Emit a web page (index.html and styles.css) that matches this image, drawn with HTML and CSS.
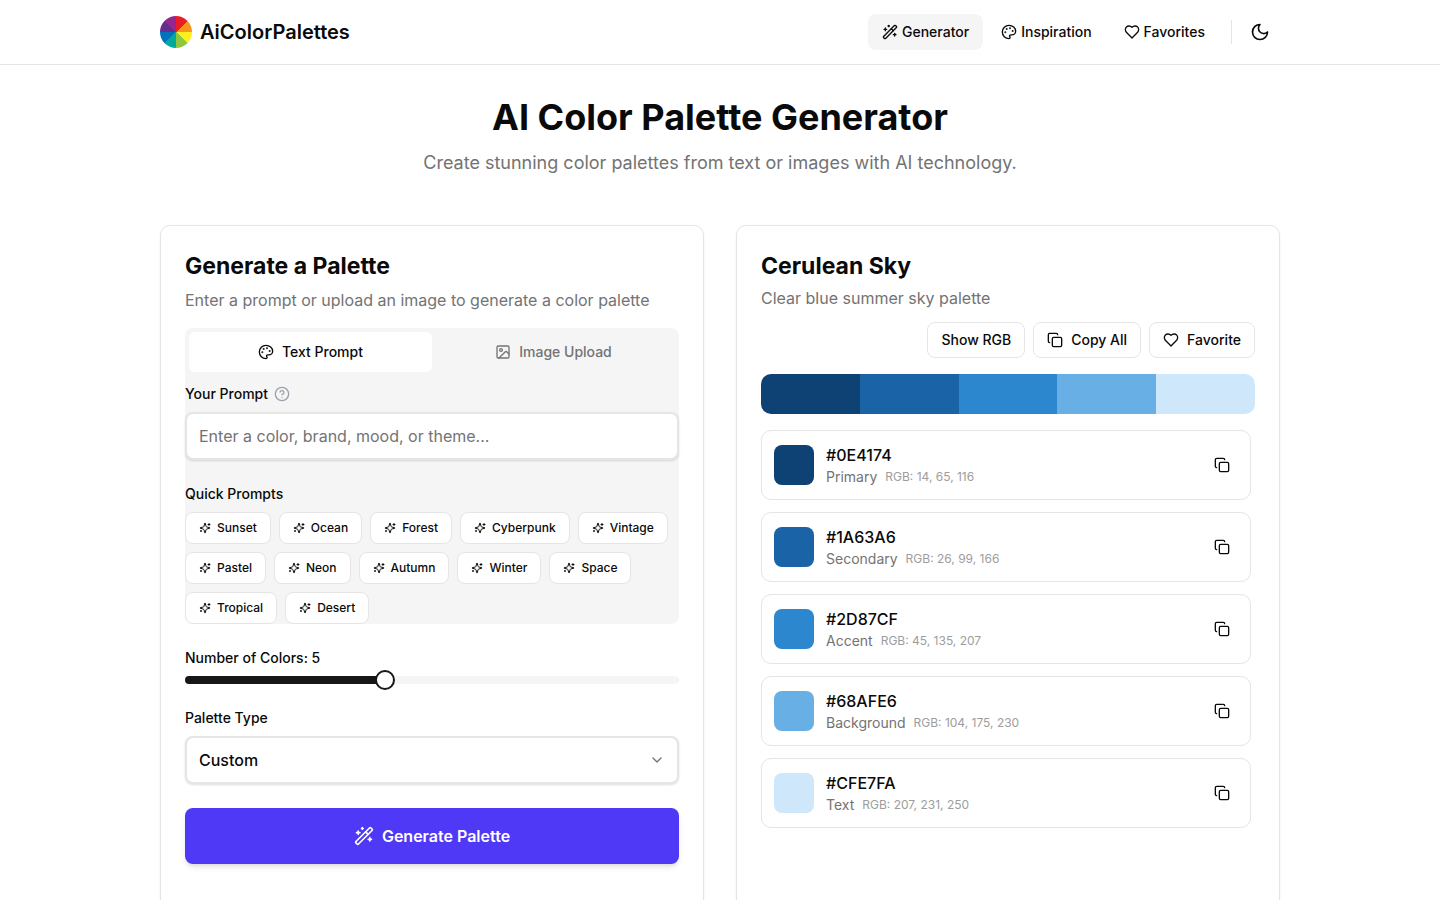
FILE: index.html
```html
<!DOCTYPE html>
<html lang="en">
<head>
<meta charset="utf-8">
<meta name="viewport" content="width=device-width, initial-scale=1">
<title>AiColorPalettes</title>
<link rel="stylesheet" href="styles.css">
</head>
<body>
<svg class="sprite" aria-hidden="true">
  <symbol id="wand" viewBox="0 0 24 24"><path d="m21.64 3.64-1.28-1.28a1.21 1.21 0 0 0-1.72 0L2.36 18.64a1.21 1.21 0 0 0 0 1.72l1.28 1.28a1.2 1.2 0 0 0 1.72 0L21.64 5.36a1.2 1.2 0 0 0 0-1.72"/><path d="m14 7 3 3"/><path d="M5 6v4"/><path d="M19 14v4"/><path d="M10 2v2"/><path d="M7 8H3"/><path d="M21 16h-4"/><path d="M11 3H9"/></symbol>
  <symbol id="palette" viewBox="0 0 24 24"><circle cx="13.5" cy="6.5" r=".5" fill="currentColor"/><circle cx="17.5" cy="10.5" r=".5" fill="currentColor"/><circle cx="8.5" cy="7.5" r=".5" fill="currentColor"/><circle cx="6.5" cy="12.5" r=".5" fill="currentColor"/><path d="M12 2C6.5 2 2 6.5 2 12s4.5 10 10 10c.926 0 1.648-.746 1.648-1.688 0-.437-.18-.835-.437-1.125-.29-.289-.438-.652-.438-1.125a1.64 1.64 0 0 1 1.668-1.668h1.996c3.051 0 5.555-2.503 5.555-5.554C21.965 6.012 17.461 2 12 2z"/></symbol>
  <symbol id="heart" viewBox="0 0 24 24"><path d="M19 14c1.49-1.46 3-3.21 3-5.5A5.5 5.5 0 0 0 16.5 3c-1.76 0-3 .5-4.5 2-1.5-1.5-2.74-2-4.5-2A5.5 5.5 0 0 0 2 8.5c0 2.3 1.5 4.05 3 5.5l7 7Z"/></symbol>
  <symbol id="moon" viewBox="0 0 24 24"><path d="M12 3a6 6 0 0 0 9 9 9 9 0 1 1-9-9Z"/></symbol>
  <symbol id="copy" viewBox="0 0 24 24"><rect width="14" height="14" x="8" y="8" rx="2"/><path d="M4 16c-1.1 0-2-.9-2-2V4c0-1.1.9-2 2-2h10c1.1 0 2 .9 2 2"/></symbol>
  <symbol id="image" viewBox="0 0 24 24"><rect width="18" height="18" x="3" y="3" rx="2"/><circle cx="9" cy="9" r="2"/><path d="m21 15-3.086-3.086a2 2 0 0 0-2.828 0L6 21"/></symbol>
  <symbol id="help" viewBox="0 0 24 24"><circle cx="12" cy="12" r="10"/><path d="M9.09 9a3 3 0 0 1 5.83 1c0 2-3 3-3 3"/><path d="M12 17h.01"/></symbol>
  <symbol id="chevron" viewBox="0 0 24 24"><path d="m6 9 6 6 6-6"/></symbol>
  <symbol id="sparkles" viewBox="0 0 24 24"><path d="M9.937 15.5A2 2 0 0 0 8.5 14.063l-6.135-1.582a.5.5 0 0 1 0-.962L8.5 9.936A2 2 0 0 0 9.937 8.5l1.582-6.135a.5.5 0 0 1 .963 0L14.063 8.5A2 2 0 0 0 15.5 9.937l6.135 1.581a.5.5 0 0 1 0 .964L15.5 14.063a2 2 0 0 0-1.437 1.437l-1.582 6.135a.5.5 0 0 1-.963 0z"/><path d="M20 3v4"/><path d="M22 5h-4"/><path d="M4 17v2"/><path d="M5 18H3"/></symbol>
</svg>

<header class="site-header">
  <div class="container header-row">
    <a class="brand" href="#">
      <span class="logo"></span>
      <span>AiColorPalettes</span>
    </a>
    <nav class="nav">
      <a class="nav-link active" href="#"><svg class="icon"><use href="#wand"/></svg>Generator</a>
      <a class="nav-link" href="#"><svg class="icon"><use href="#palette"/></svg>Inspiration</a>
      <a class="nav-link" href="#"><svg class="icon"><use href="#heart"/></svg>Favorites</a>
      <span class="divider"></span>
      <button class="theme-toggle" type="button" aria-label="Toggle theme"><svg class="icon icon-lg"><use href="#moon"/></svg></button>
    </nav>
  </div>
</header>

<main class="container main">
  <div class="hero">
    <h1>AI Color Palette Generator</h1>
    <p>Create stunning color palettes from text or images with AI technology.</p>
  </div>

  <div class="columns">
    <section class="card">
      <h2>Generate a Palette</h2>
      <p class="intro">Enter a prompt or upload an image to generate a color palette</p>

      <div class="tabs">
        <div class="tab-list" role="tablist">
          <button class="tab selected" type="button" role="tab" aria-selected="true"><svg class="icon"><use href="#palette"/></svg>Text Prompt</button>
          <button class="tab" type="button" role="tab" aria-selected="false"><svg class="icon"><use href="#image"/></svg>Image Upload</button>
        </div>
        <div class="field prompt-field">
          <div class="label-row">
            <label class="label" for="prompt">Your Prompt</label>
            <svg class="icon help"><use href="#help"/></svg>
          </div>
          <input class="control" id="prompt" type="text" placeholder="Enter a color, brand, mood, or theme...">
        </div>
        <div class="field">
          <span class="label">Quick Prompts</span>
          <div class="chips">
            <button class="chip" type="button"><svg class="icon icon-sm"><use href="#sparkles"/></svg>Sunset</button>
            <button class="chip" type="button"><svg class="icon icon-sm"><use href="#sparkles"/></svg>Ocean</button>
            <button class="chip" type="button"><svg class="icon icon-sm"><use href="#sparkles"/></svg>Forest</button>
            <button class="chip" type="button"><svg class="icon icon-sm"><use href="#sparkles"/></svg>Cyberpunk</button>
            <button class="chip" type="button"><svg class="icon icon-sm"><use href="#sparkles"/></svg>Vintage</button>
            <button class="chip" type="button"><svg class="icon icon-sm"><use href="#sparkles"/></svg>Pastel</button>
            <button class="chip" type="button"><svg class="icon icon-sm"><use href="#sparkles"/></svg>Neon</button>
            <button class="chip" type="button"><svg class="icon icon-sm"><use href="#sparkles"/></svg>Autumn</button>
            <button class="chip" type="button"><svg class="icon icon-sm"><use href="#sparkles"/></svg>Winter</button>
            <button class="chip" type="button"><svg class="icon icon-sm"><use href="#sparkles"/></svg>Space</button>
            <button class="chip" type="button"><svg class="icon icon-sm"><use href="#sparkles"/></svg>Tropical</button>
            <button class="chip" type="button"><svg class="icon icon-sm"><use href="#sparkles"/></svg>Desert</button>
          </div>
        </div>
      </div>

      <div class="field">
        <label class="label" for="count">Number of Colors: 5</label>
        <input class="slider" id="count" type="range" min="3" max="8" value="5">
      </div>

      <div class="field">
        <label class="label" for="type">Palette Type</label>
        <div class="select-wrap">
          <select class="control select" id="type"><option>Custom</option></select>
          <svg class="icon select-arrow"><use href="#chevron"/></svg>
        </div>
      </div>

      <button class="generate" type="button"><svg class="icon icon-lg"><use href="#wand"/></svg>Generate Palette</button>
    </section>

    <section class="card">
      <h2>Cerulean Sky</h2>
      <p class="summary">Clear blue summer sky palette</p>
      <div class="actions">
        <button class="action" type="button">Show RGB</button>
        <button class="action" type="button"><svg class="icon"><use href="#copy"/></svg>Copy All</button>
        <button class="action" type="button"><svg class="icon"><use href="#heart"/></svg>Favorite</button>
      </div>
      <div class="strip">
        <span class="tone-1"></span><span class="tone-2"></span><span class="tone-3"></span><span class="tone-4"></span><span class="tone-5"></span>
      </div>
      <ul class="colors">
        <li class="color">
          <span class="swatch tone-1"></span>
          <div class="color-text"><div class="hex">#0E4174</div><div class="meta"><span class="role">Primary</span><span class="rgb">RGB: 14, 65, 116</span></div></div>
          <button class="copy" type="button" aria-label="Copy #0E4174"><svg class="icon"><use href="#copy"/></svg></button>
        </li>
        <li class="color">
          <span class="swatch tone-2"></span>
          <div class="color-text"><div class="hex">#1A63A6</div><div class="meta"><span class="role">Secondary</span><span class="rgb">RGB: 26, 99, 166</span></div></div>
          <button class="copy" type="button" aria-label="Copy #1A63A6"><svg class="icon"><use href="#copy"/></svg></button>
        </li>
        <li class="color">
          <span class="swatch tone-3"></span>
          <div class="color-text"><div class="hex">#2D87CF</div><div class="meta"><span class="role">Accent</span><span class="rgb">RGB: 45, 135, 207</span></div></div>
          <button class="copy" type="button" aria-label="Copy #2D87CF"><svg class="icon"><use href="#copy"/></svg></button>
        </li>
        <li class="color">
          <span class="swatch tone-4"></span>
          <div class="color-text"><div class="hex">#68AFE6</div><div class="meta"><span class="role">Background</span><span class="rgb">RGB: 104, 175, 230</span></div></div>
          <button class="copy" type="button" aria-label="Copy #68AFE6"><svg class="icon"><use href="#copy"/></svg></button>
        </li>
        <li class="color">
          <span class="swatch tone-5"></span>
          <div class="color-text"><div class="hex">#CFE7FA</div><div class="meta"><span class="role">Text</span><span class="rgb">RGB: 207, 231, 250</span></div></div>
          <button class="copy" type="button" aria-label="Copy #CFE7FA"><svg class="icon"><use href="#copy"/></svg></button>
        </li>
      </ul>
    </section>
  </div>
</main>
</body>
</html>
```
FILE: styles.css
```css
:root {
  --text: #0a0a0a;
  --muted: #737373;
  --border: #e5e5e5;
  --surface: #f5f5f5;
  --accent: #4f39f6;
}

* { box-sizing: border-box; }

html { scrollbar-width: none; }

body {
  margin: 0;
  background: #fff;
  color: var(--text);
  font-family: Inter, "Liberation Sans", sans-serif;
  font-size: 16px;
  line-height: 24px;
}

h1, h2, p, ul { margin: 0; padding: 0; }

a { color: inherit; text-decoration: none; }

button, input, select {
  margin: 0;
  font: inherit;
  color: inherit;
}

button { cursor: pointer; }

.sprite { display: none; }

.icon {
  flex: none;
  width: 16px;
  height: 16px;
  fill: none;
  stroke: currentColor;
  stroke-width: 2;
  stroke-linecap: round;
  stroke-linejoin: round;
}

.icon-sm { width: 12px; height: 12px; }
.icon-lg { width: 20px; height: 20px; }

.container {
  max-width: 1152px;
  margin: 0 auto;
  padding: 0 16px;
}

/* Header */
.site-header { border-bottom: 1px solid var(--border); }

.header-row {
  display: flex;
  align-items: center;
  justify-content: space-between;
  min-height: 64px;
}

.brand {
  display: flex;
  align-items: center;
  gap: 8px;
  font-size: 20px;
  font-weight: 600;
  line-height: 28px;
}

.logo {
  width: 32px;
  height: 32px;
  border-radius: 50%;
  background: conic-gradient(
    #ed1c24 0 45deg,
    #f7941d 45deg 90deg,
    #fcee21 90deg 135deg,
    #8dc63f 135deg 180deg,
    #00a99d 180deg 225deg,
    #0072bc 225deg 270deg,
    #662d91 270deg 315deg,
    #92278f 315deg
  );
}

.nav { display: flex; align-items: center; gap: 4px; }

.nav-link {
  display: flex;
  align-items: center;
  gap: 4px;
  padding: 8px 14px;
  border-radius: 8px;
  font-size: 14px;
  font-weight: 500;
  line-height: 20px;
}

.nav-link.active { background: var(--surface); }

.divider {
  width: 1px;
  height: 24px;
  margin: 0 4px 0 8px;
  background: var(--border);
}

.theme-toggle {
  display: flex;
  align-items: center;
  justify-content: center;
  width: 40px;
  height: 40px;
  padding: 0;
  border: 0;
  border-radius: 8px;
  background: none;
}

/* Hero */
.main { padding-top: 32px; padding-bottom: 32px; }

.hero { margin-bottom: 48px; text-align: center; }

.hero h1 {
  margin-bottom: 12px;
  font-size: 36px;
  font-weight: 700;
  line-height: 40px;
}

.hero p {
  color: var(--muted);
  font-size: 18px;
  line-height: 28px;
}

/* Cards */
.columns {
  display: grid;
  grid-template-columns: repeat(2, minmax(0, 1fr));
  gap: 32px;
}

.card {
  padding: 24px 24px 64px;
  border: 1px solid var(--border);
  border-radius: 10px;
  box-shadow: 0 1px 2px rgb(0 0 0 / 8%);
}

.card h2 {
  font-size: 23px;
  font-weight: 700;
  line-height: 32px;
}

.intro { margin: 6px 0 16px; color: var(--muted); }
.summary { margin: 4px 0 12px; color: var(--muted); }

.tabs {
  margin-bottom: 24px;
  border-radius: 8px;
  background: var(--surface);
}

.tab-list {
  display: grid;
  grid-template-columns: 1fr 1fr;
  padding: 4px;
}

.tab {
  display: flex;
  align-items: center;
  justify-content: center;
  gap: 8px;
  height: 40px;
  padding: 0 12px;
  border: 0;
  border-radius: 6px;
  background: none;
  color: var(--muted);
  font-size: 14px;
  font-weight: 500;
  line-height: 20px;
}

.tab.selected { background: #fff; color: var(--text); }

.field {
  display: flex;
  flex-direction: column;
  gap: 8px;
  margin-bottom: 24px;
}

.prompt-field { margin-top: 8px; }
.tabs .field:last-child { margin-bottom: 0; }

.label-row { display: flex; align-items: center; gap: 6px; }

.label { font-size: 14px; font-weight: 500; line-height: 20px; }

.help { color: #99a1af; }

.control {
  width: 100%;
  height: 48px;
  padding: 0 12px;
  border: 2px solid var(--border);
  border-radius: 8px;
  background: #fff;
  box-shadow: 0 1px 3px rgb(0 0 0 / 8%), 0 1px 2px rgb(0 0 0 / 6%);
}

.control::placeholder { color: var(--muted); opacity: 1; }

.chips { display: flex; flex-wrap: wrap; gap: 8px; }

.chip {
  display: flex;
  align-items: center;
  gap: 6px;
  height: 32px;
  padding: 0 13px;
  border: 1px solid var(--border);
  border-radius: 8px;
  background: #fff;
  font-size: 12px;
  font-weight: 500;
  line-height: 16px;
}

.slider {
  appearance: none;
  width: 100%;
  height: 8px;
  border-radius: 4px;
  background: linear-gradient(to right, #171717 40%, var(--surface) 40%);
}

.slider::-webkit-slider-thumb {
  appearance: none;
  width: 20px;
  height: 20px;
  border: 2px solid #171717;
  border-radius: 50%;
  background: #fff;
}

.select-wrap { position: relative; }

.select {
  display: block;
  appearance: none;
  font-weight: 500;
}

.select-arrow {
  position: absolute;
  top: 16px;
  right: 14px;
  color: var(--muted);
  pointer-events: none;
}

.generate {
  display: flex;
  align-items: center;
  justify-content: center;
  gap: 8px;
  width: 100%;
  height: 56px;
  border: 0;
  border-radius: 8px;
  background: var(--accent);
  box-shadow: 0 4px 6px -1px rgb(0 0 0 / 10%), 0 2px 4px -2px rgb(0 0 0 / 10%);
  color: #fff;
  font-weight: 600;
}

/* Palette result */
.actions {
  display: flex;
  justify-content: flex-end;
  gap: 8px;
  margin-bottom: 16px;
}

.action {
  display: flex;
  align-items: center;
  gap: 8px;
  height: 36px;
  padding: 0 13px;
  border: 1px solid var(--border);
  border-radius: 8px;
  background: #fff;
  font-size: 14px;
  font-weight: 500;
  line-height: 20px;
}

.strip {
  display: flex;
  height: 40px;
  margin-bottom: 16px;
  border-radius: 10px;
  overflow: hidden;
}

.strip span { flex: 1; }

.tone-1 { background: #0e4174; }
.tone-2 { background: #1a63a6; }
.tone-3 { background: #2d87cf; }
.tone-4 { background: #68afe6; }
.tone-5 { background: #cfe7fa; }

.colors {
  display: flex;
  flex-direction: column;
  gap: 12px;
  padding-right: 4px;
  list-style: none;
}

.color {
  display: flex;
  align-items: center;
  gap: 12px;
  padding: 12px;
  border: 1px solid var(--border);
  border-radius: 10px;
}

.swatch {
  flex: none;
  width: 40px;
  height: 40px;
  border-radius: 8px;
}

.color-text { flex: 1; }

.hex { font-weight: 500; }

.meta {
  display: flex;
  align-items: center;
  gap: 8px;
  line-height: 20px;
}

.role { color: var(--muted); font-size: 14px; }
.rgb { color: #9d9d9d; font-size: 12px; }

.copy {
  display: flex;
  align-items: center;
  justify-content: center;
  width: 32px;
  height: 32px;
  padding: 0;
  border: 0;
  border-radius: 8px;
  background: none;
}
```
